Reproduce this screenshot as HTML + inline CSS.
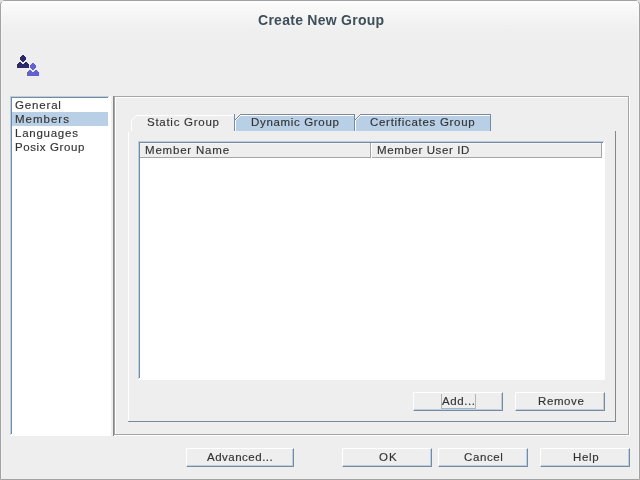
<!DOCTYPE html>
<html><head><meta charset="utf-8">
<style>
html,body{margin:0;padding:0;}
body{width:640px;height:480px;overflow:hidden;position:relative;background:#dcdcdc;font-family:"Liberation Sans",sans-serif;}
div{position:absolute;box-sizing:border-box;}
#win{left:0;top:0;width:640px;height:480px;border:1px solid #a2a2a2;border-radius:5px 5px 0 0;box-shadow:inset 1px 0 0 rgba(255,255,255,.35),inset -1px 0 0 rgba(255,255,255,.35);
 background:linear-gradient(#fdfdfd 0px,#f7f7f7 10px,#efefef 30px,#eeeeee 40px,#eeeeee 480px);}
.t{will-change:transform;-webkit-text-stroke:0.15px #333;white-space:nowrap;font-size:11.5px;line-height:14px;color:#333333;transform-origin:0 0;}
.l{background:#7a8a99;}
.w{background:#ffffff;}
.b{background:#b8cfe5;}
.g{background:#a6a6a6;}
.btn{background:#eeeeee;border-top:1px solid #fff;border-left:1px solid #fff;border-right:1px solid #7a8a99;border-bottom:1px solid #7a8a99;box-shadow:inset -1px -1px 0 #b8cfe5;}
</style></head><body>
<div id="win"></div>
<!-- white highlight inside window -->
<div class="w" style="left:1px;top:1px;width:638px;height:1px;opacity:.6"></div>

<!-- title -->
<div class="t" id="title" style="-webkit-text-stroke:0;left:257.97px;top:12px;font-size:14px;line-height:17px;font-weight:bold;color:#3e4f58;letter-spacing:0.267px;">Create New Group</div>

<!-- icon -->
<svg style="position:absolute;left:0;top:0" width="60" height="90" shape-rendering="crispEdges">
 <g fill="#2c2a68">
  <rect x="22" y="55" width="2" height="1"/><rect x="21" y="56" width="4" height="1"/><rect x="20" y="57" width="6" height="3"/><rect x="21" y="60" width="4" height="1"/><rect x="22" y="61" width="2" height="1"/>
  <rect x="19" y="62" width="2" height="1"/><rect x="25" y="62" width="2" height="1"/><rect x="18" y="63" width="4" height="1"/><rect x="24" y="63" width="4" height="1"/><rect x="17" y="64" width="12" height="4"/>
 </g>
 <g fill="#6462cc">
  <rect x="32" y="63" width="2" height="1"/><rect x="31" y="64" width="4" height="1"/><rect x="30" y="65" width="6" height="3"/><rect x="31" y="68" width="4" height="1"/><rect x="32" y="69" width="2" height="1"/>
  <rect x="29" y="70" width="2" height="1"/><rect x="35" y="70" width="2" height="1"/><rect x="28" y="71" width="4" height="1"/><rect x="34" y="71" width="4" height="1"/><rect x="27" y="72" width="12" height="4"/>
 </g>
</svg>

<!-- list box -->
<div class="w" style="left:10px;top:96px;width:101px;height:340px;"></div>
<div class="b" style="left:10px;top:96px;width:99px;height:1px;"></div>
<div class="b" style="left:10px;top:96px;width:1px;height:339px;"></div>
<div class="l" style="left:11px;top:97px;width:97px;height:1px;"></div>
<div class="l" style="left:11px;top:97px;width:1px;height:337px;"></div>
<div class="b" style="left:12px;top:112px;width:96px;height:14px;"></div>
<div class="t" id="li0" style="left:14.88px;top:98px;letter-spacing:0.833px;">General</div>
<div class="t" id="li1" style="left:14.87px;top:112px;letter-spacing:1.000px;">Members</div>
<div class="t" id="li2" style="left:14.89px;top:126px;letter-spacing:0.750px;">Languages</div>
<div class="t" id="li3" style="left:14.91px;top:140px;letter-spacing:0.600px;">Posix Group</div>

<!-- right panel borders -->
<div class="l" style="left:113px;top:96px;width:1px;height:340px;"></div>
<div class="g" style="left:114px;top:96px;width:515px;height:1px;"></div>
<div class="g" style="left:114px;top:96px;width:1px;height:339px;"></div>
<div class="g" style="left:628px;top:96px;width:1px;height:339px;"></div>
<div class="g" style="left:114px;top:434px;width:515px;height:1px;"></div>
<div class="w" style="left:115px;top:97px;width:513px;height:1px;"></div>
<div class="w" style="left:115px;top:97px;width:1px;height:337px;"></div>
<div class="w" style="left:629px;top:96px;width:1px;height:340px;"></div>
<div class="w" style="left:114px;top:435px;width:516px;height:1px;"></div>

<!-- tabs -->
<svg style="position:absolute;left:0;top:0" width="640" height="140" shape-rendering="crispEdges">
 <!-- dynamic tab -->
 <polygon points="235,120 240,115 354,115 354,131 235,131" fill="#b8cfe5"/>
 <!-- certificates tab -->
 <polygon points="355,120 360,115 490,115 490,131 355,131" fill="#b8cfe5"/>
 <g fill="#ffffff">
  <!-- selected tab highlight -->
  <rect x="131" y="120" width="1" height="11"/>
  <rect x="132" y="119" width="1" height="1"/><rect x="133" y="118" width="1" height="1"/><rect x="134" y="117" width="1" height="1"/><rect x="135" y="116" width="1" height="1"/>
  <rect x="136" y="115" width="98" height="1"/>
  <!-- dynamic highlight -->
  <rect x="235" y="120" width="1" height="11"/>
  <rect x="236" y="119" width="1" height="1"/><rect x="237" y="118" width="1" height="1"/><rect x="238" y="117" width="1" height="1"/><rect x="239" y="116" width="1" height="1"/>
  <rect x="240" y="115" width="114" height="1"/>
  <!-- cert highlight -->
  <rect x="355" y="120" width="1" height="11"/>
  <rect x="356" y="119" width="1" height="1"/><rect x="357" y="118" width="1" height="1"/><rect x="358" y="117" width="1" height="1"/><rect x="359" y="116" width="1" height="1"/>
  <rect x="360" y="115" width="130" height="1"/>
 </g>
 <g fill="#7a8a99">
  <rect x="234" y="114" width="1" height="17"/>
  <rect x="235" y="119" width="1" height="1"/><rect x="236" y="118" width="1" height="1"/><rect x="237" y="117" width="1" height="1"/><rect x="238" y="116" width="1" height="1"/><rect x="239" y="115" width="1" height="1"/>
  <rect x="240" y="114" width="115" height="1"/>
  <rect x="354" y="114" width="1" height="17"/>
  <rect x="355" y="119" width="1" height="1"/><rect x="356" y="118" width="1" height="1"/><rect x="357" y="117" width="1" height="1"/><rect x="358" y="116" width="1" height="1"/><rect x="359" y="115" width="1" height="1"/>
  <rect x="360" y="114" width="131" height="1"/>
  <rect x="490" y="114" width="1" height="17"/>
 </g>
</svg>
<div class="t" id="tab0" style="left:146.87px;top:115px;letter-spacing:0.727px;">Static Group</div>
<div class="t" id="tab1" style="left:250.90px;top:115px;letter-spacing:0.667px;">Dynamic Group</div>
<div class="t" id="tab2" style="left:369.87px;top:115px;letter-spacing:0.706px;">Certificates Group</div>

<!-- content area border -->
<div class="w" style="left:128px;top:132px;width:1px;height:289px;"></div>
<div class="l" style="left:615px;top:131px;width:1px;height:291px;"></div>
<div class="l" style="left:128px;top:421px;width:488px;height:1px;"></div>

<!-- table scrollpane -->
<div class="w" style="left:138px;top:141px;width:467px;height:239px;"></div>
<div class="b" style="left:138px;top:141px;width:466px;height:1px;"></div>
<div class="b" style="left:138px;top:141px;width:1px;height:238px;"></div>
<div class="l" style="left:139px;top:142px;width:464px;height:1px;"></div>
<div class="l" style="left:139px;top:142px;width:1px;height:236px;"></div>
<!-- header -->
<div style="left:140px;top:143px;width:462px;height:15px;background:#eeeeee;"></div>
<div style="left:140px;top:143px;width:462px;height:1px;background:#f6f6f6;"></div>
<div class="g" style="left:140px;top:157px;width:231px;height:1px;"></div>
<div class="g" style="left:370px;top:143px;width:1px;height:15px;"></div>
<div class="w" style="left:371px;top:143px;width:1px;height:15px;"></div>
<div class="g" style="left:372px;top:157px;width:230px;height:1px;"></div>
<div class="g" style="left:601px;top:143px;width:1px;height:15px;"></div>
<div class="t" id="h0" style="left:144.90px;top:143px;letter-spacing:0.800px;">Member Name</div>
<div class="t" id="h1" style="left:376.90px;top:143px;letter-spacing:0.615px;">Member User ID</div>

<!-- buttons -->
<div class="btn" style="left:413px;top:392px;width:90px;height:19px;"></div>
<div style="left:441px;top:394px;width:35px;height:15px;border:1px solid #a3b8cc;border-top:none;"></div>
<div class="t" id="b0" style="left:442.00px;top:394px;letter-spacing:0.600px;">Add...</div>
<div class="btn" style="left:515px;top:392px;width:90px;height:19px;"></div>
<div class="t" id="b1" style="left:537.93px;top:394px;letter-spacing:0.600px;">Remove</div>
<div class="btn" style="left:186px;top:448px;width:108px;height:19px;"></div>
<div class="t" id="b2" style="left:207.00px;top:450px;letter-spacing:0.500px;">Advanced...</div>
<div class="btn" style="left:342px;top:448px;width:90px;height:19px;"></div>
<div class="t" id="b3" style="left:378.93px;top:450px;letter-spacing:1.000px;">OK</div>
<div class="btn" style="left:438px;top:448px;width:90px;height:19px;"></div>
<div class="t" id="b4" style="left:463.91px;top:450px;letter-spacing:0.600px;">Cancel</div>
<div class="btn" style="left:540px;top:448px;width:90px;height:19px;"></div>
<div class="t" id="b5" style="left:572.90px;top:450px;letter-spacing:0.667px;">Help</div>
</body></html>
